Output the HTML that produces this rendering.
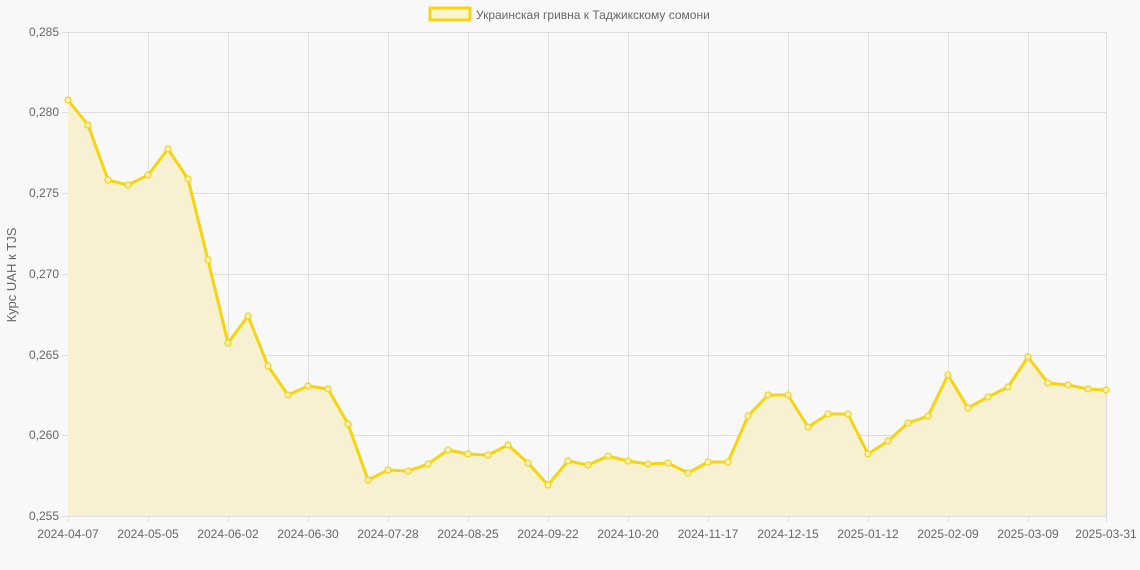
<!DOCTYPE html>
<html><head><meta charset="utf-8"><style>
html,body{margin:0;padding:0;background:#f8f8f8;}
svg{display:block;font-family:"Liberation Sans","Noto Sans CJK JP",sans-serif;}
</style></head><body>
<svg width="1140" height="570" viewBox="0 0 1140 570" xmlns="http://www.w3.org/2000/svg">
<defs>
<marker id="m" markerWidth="10" markerHeight="10" refX="5" refY="5" markerUnits="userSpaceOnUse">
<circle cx="5" cy="5" r="3" fill="#faf0b8" stroke="#f2d314" stroke-width="1.2"/>
</marker>
</defs>
<rect width="1140" height="570" fill="#f8f8f8"/>
<g stroke="#dedede" stroke-width="1">
<line x1="62" y1="32.5" x2="1106" y2="32.5"/>
<line x1="62" y1="112.5" x2="1106" y2="112.5"/>
<line x1="62" y1="193.5" x2="1106" y2="193.5"/>
<line x1="62" y1="274.5" x2="1106" y2="274.5"/>
<line x1="62" y1="355.5" x2="1106" y2="355.5"/>
<line x1="62" y1="435.5" x2="1106" y2="435.5"/>
<line x1="62" y1="516.5" x2="1106" y2="516.5"/>
<line x1="68.5" y1="32" x2="68.5" y2="522"/>
<line x1="148.5" y1="32" x2="148.5" y2="522"/>
<line x1="228.5" y1="32" x2="228.5" y2="522"/>
<line x1="308.5" y1="32" x2="308.5" y2="522"/>
<line x1="388.5" y1="32" x2="388.5" y2="522"/>
<line x1="468.5" y1="32" x2="468.5" y2="522"/>
<line x1="548.5" y1="32" x2="548.5" y2="522"/>
<line x1="628.5" y1="32" x2="628.5" y2="522"/>
<line x1="708.5" y1="32" x2="708.5" y2="522"/>
<line x1="788.5" y1="32" x2="788.5" y2="522"/>
<line x1="868.5" y1="32" x2="868.5" y2="522"/>
<line x1="948.5" y1="32" x2="948.5" y2="522"/>
<line x1="1028.5" y1="32" x2="1028.5" y2="522"/>
<line x1="1106.5" y1="32" x2="1106.5" y2="522"/>
</g>
<polygon fill="#f7f1d2" points="68,100 88,125 108,180 128,185 148,175 168,149 188,179 208,260 228,343 248,316 268,366 288,395 308,386 328,389 348,424 368,480 388,470 408,471 428,464 448,450 468,454 488,455 508,445 528,463 548,485 568,461 588,465 608,456 628,461 648,464 668,463 688,473 708,462 728,462 748,416 768,395 788,395 808,427 828,414 848,414 868,454 888,441 908,423 928,416 948,375 968,408 988,397 1008,387 1028,357 1048,383 1068,385 1088,389 1106,390 1106,516 68,516"/>
<polyline fill="none" stroke="#f5d410" stroke-width="3" stroke-linejoin="round" marker-start="url(#m)" marker-mid="url(#m)" marker-end="url(#m)" points="68,100 88,125 108,180 128,185 148,175 168,149 188,179 208,260 228,343 248,316 268,366 288,395 308,386 328,389 348,424 368,480 388,470 408,471 428,464 448,450 468,454 488,455 508,445 528,463 548,485 568,461 588,465 608,456 628,461 648,464 668,463 688,473 708,462 728,462 748,416 768,395 788,395 808,427 828,414 848,414 868,454 888,441 908,423 928,416 948,375 968,408 988,397 1008,387 1028,357 1048,383 1068,385 1088,389 1106,390"/>
<g fill="#666" font-size="12" text-anchor="end">
<text x="59" y="36">0,285</text>
<text x="59" y="116">0,280</text>
<text x="59" y="197">0,275</text>
<text x="59" y="278">0,270</text>
<text x="59" y="359">0,265</text>
<text x="59" y="439">0,260</text>
<text x="59" y="520">0,255</text>
</g>
<g fill="#666" font-size="12" text-anchor="middle">
<text x="68" y="538">2024-04-07</text>
<text x="148" y="538">2024-05-05</text>
<text x="228" y="538">2024-06-02</text>
<text x="308" y="538">2024-06-30</text>
<text x="388" y="538">2024-07-28</text>
<text x="468" y="538">2024-08-25</text>
<text x="548" y="538">2024-09-22</text>
<text x="628" y="538">2024-10-20</text>
<text x="708" y="538">2024-11-17</text>
<text x="788" y="538">2024-12-15</text>
<text x="868" y="538">2025-01-12</text>
<text x="948" y="538">2025-02-09</text>
<text x="1028" y="538">2025-03-09</text>
<text x="1106" y="538">2025-03-31</text>
</g>
<text transform="translate(16,275) rotate(-90)" fill="#666" font-size="13" text-anchor="middle">Курс UAH к TJS</text>
<rect x="430" y="8" width="40" height="12" fill="#faf3cc" stroke="#f5d410" stroke-width="3"/>
<text x="476" y="19" fill="#666" font-size="12">Украинская гривна к Таджикскому сомони</text>
</svg>
</body></html>
